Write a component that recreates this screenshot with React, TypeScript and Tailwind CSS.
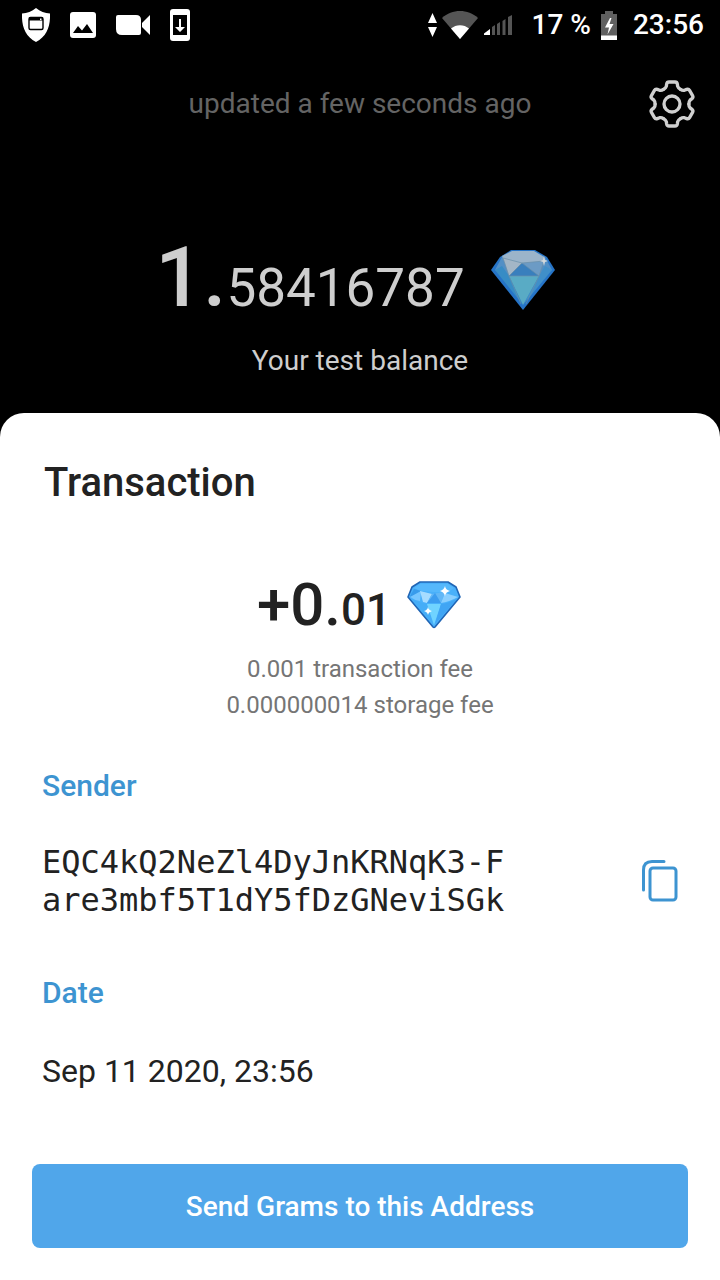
import type { ReactNode } from 'react';

interface SectionProps {
    title: string;
    children: ReactNode;
}

const transaction = {
    fees: ['0.001 transaction fee', '0.000000014 storage fee'],
    sender: ['EQC4kQ2NeZl4DyJnKRNqK3-F', 'are3mbf5T1dY5fDzGNeviSGk'],
    date: 'Sep 11 2020, 23:56',
};

const StatusBar = () => (
    <div className="flex h-[50px] items-center justify-between pl-[22px] pr-4 text-[28px] font-medium text-white">
        <div className="flex items-center gap-5">
            {/* Shield */}
            <svg className="h-[34px] w-7" viewBox="0 0 28 34" fill="none">
                <path d="M14 0C10 3.500 5 5 0 5.500C-.5 18 3 28 14 34C25 28 28.500 18 28 5.500C23 5 18 3.500 14 0Z" fill="white" />
                <rect x="7" y="9.500" width="14" height="12" rx="1.500" stroke="black" strokeWidth="1.400" />
                <path d="M7 9.500h14v3H7z" fill="black" />
                <path d="M18 10.500h1.500v1.500H18z" fill="white" />
            </svg>
            {/* Picture */}
            <svg className="h-[26px] w-[26px]" viewBox="0 0 26 26">
                <rect width="26" height="26" rx="3" fill="white" />
                <path d="M3 21L8 14L12 18.500L17 12L23 21Z" fill="black" />
            </svg>
            {/* Video camera */}
            <svg className="h-5 w-[34px]" viewBox="0 0 34 20" fill="white">
                <path d="M2 0H20Q25 0 25 5V18Q25 20 23 20H6Q0 20 0 14V2Q0 0 2 0Z" />
                <path d="M26 8L34 0V20L26 12Z" />
            </svg>
            {/* Phone download */}
            <svg className="h-8 w-5" viewBox="0 0 20 32">
                <rect width="20" height="32" rx="3" fill="white" />
                <path d="M3 6h14v20H3z" fill="black" />
                <path d="M9 10h2v8H15l-5 5-5-5h4z" fill="white" />
            </svg>
        </div>
        <div className="flex items-center">
            <svg className="mr-1 h-6 w-[11px]" viewBox="0 0 11 24" fill="white">
                <path d="M5.500 0L10 10H1zM5.500 24L10 14H1z" />
            </svg>
            <svg className="mr-1.5 h-7 w-9" viewBox="0 0 36 28">
                <path d="M0 7C10-2.300 26-2.300 36 7L18 28Z" fill="#555555" />
                <path d="M9 17.500C14 13 22 13 27 17.500L18 28Z" fill="white" />
            </svg>
            <svg className="mr-5 h-5 w-7" viewBox="0 0 28 20">
                <path d="M0 20v-1.500L6 14v6z" fill="white" />
                <path d="M8 20v-8l3-2v10zM13 20V9l3-2v13zM18.500 20V6l3-2v16zM24 20V2l4-2v20z" fill="#555555" />
            </svg>
            <span>17 %</span>
            <svg className="ml-2.5 mr-4 h-[29px] w-4" viewBox="0 0 16 29">
                <path d="M4 0h8v3h4v26H0V3h4z" fill="#606060" />
                <path d="M0 24.500h16V29H0zM9 7L4 16.500h4L6.500 23.500L12.500 13H8.500L10.500 7z" fill="white" />
            </svg>
            <span>23:56</span>
        </div>
    </div>
);

const GearIcon = () => (
    <svg className="h-12 w-12" viewBox="-72 -72 144 144" fill="none" stroke="#d0d0d0" strokeWidth="10" strokeLinecap="round">
        {[0, 60, 120, 180, 240, 300].map((angle) => (
            <path
                key={angle}
                transform={`rotate(${angle})`}
                d="M-25-44Q-19-47-17-53L-16-60Q-15-66-9-66H9Q15-66 16-60L17-53Q19-47 25-44"
            />
        ))}
        <circle r="24" />
    </svg>
);

const DimGem = () => (
    <svg className="mb-[18px] h-[61px] w-16 self-end" viewBox="0 0 64 61">
        <path d="M20 1H44L56 8L64 21L32 61L0 21L9 8Z" fill="#2674c7" />
        <path d="M20 3H44L54 8L61 21L50 27H15L4 21L11 8Z" fill="#528fc5" />
        <path d="M11 7L21 2H43L53 8L54 13L33 15L14 13Z" fill="#9bb4ca" />
        <path d="M12 9L31 14L18 27Z" fill="#a3b6c6" />
        <path d="M31 14L53 12L48 27Z" fill="#6c9bc5" />
        <path d="M31 14L48 27H18Z" fill="#397fbd" />
        <path d="M4 21L11 17L18 27L32 56Z" fill="#378cc5" />
        <path d="M61 21L54 17L48 27L32 56Z" fill="#408fc9" />
        <path d="M18 27H48L32 56Z" fill="#59abc5" />
        <path d="M12 9L31 14L53 12L48 27L35 55M12 9L18 27L30 55M31 14L18 27H48Z" fill="none" stroke="#6a8fa9" strokeWidth=".7" />
        <path d="M53 7L54 11L57 12L54 13L53 17L52 13L49 12L52 11Z" fill="#d4d9dc" />
    </svg>
);

const BrightGem = () => (
    <svg className="h-12 w-[54px]" viewBox="0 0 54 48">
        <path d="M13 1H41L49 6L53 16L28 46Q27 47 26 46L1 16L5 6Z" fill="#49b0fa" stroke="#2065b5" strokeWidth="1.600" strokeLinejoin="round" />
        <path d="M13 3H41L47 7L40 12L14 10L7 7Z" fill="#55b8fc" />
        <path d="M7 8L14 10L4 17L3 15Z" fill="#389beb" />
        <path d="M14 10L13 20Q7 19 3 16Z" fill="#77c6ff" />
        <path d="M13 10L25 13L20 22L16 21Z" fill="#a6dcff" />
        <path d="M25 13L38 11L34 22H20Z" fill="#62b7f6" />
        <path d="M28 12L34 22H20Z" fill="#3c9df0" />
        <path d="M38 12L51 16Q42 21 34 22Z" fill="#8acfff" />
        <path d="M3 17Q10 21 20 23L26 43Z" fill="#45adf7" />
        <path d="M20 23H34L27 44Z" fill="#70d3ff" />
        <path d="M51 17Q43 22 34 23L28 43Z" fill="#40a5f4" />
        <path d="M38 5Q38.500 9 43 10Q38.500 11 38 15Q37 11 33 10Q37 9 38 5ZM21 26Q21.500 29 25 30Q21.500 31 21 34Q20.500 31 17 30Q20.500 29 21 26Z" fill="white" />
    </svg>
);

const CopyIcon = () => (
    <svg className="h-[42px] w-9" viewBox="0 0 36 42" fill="none" stroke="#3d94d1" strokeWidth="3" strokeLinecap="round">
        <path d="M1.500 30V10Q1.500 1.500 10 1.500H22" />
        <rect x="8" y="8" width="26" height="32" rx="3" />
    </svg>
);

const Section = ({ title, children }: SectionProps) => (
    <section>
        <h2 className="text-[30px] leading-10 font-medium text-[#3d94d1]">{title}</h2>
        {children}
    </section>
);

const App = () => {
    return (
        <div className="flex min-h-screen flex-col bg-black font-['Roboto',sans-serif]">
            <StatusBar />

            {/* Wallet header */}
            <header className="grid h-[108px] grid-cols-[1fr_auto_1fr] items-center">
                <p className="col-start-2 text-[28px] text-[#646464]">updated a few seconds ago</p>
                <button type="button" aria-label="Settings" className="mr-6 justify-self-end">
                    <GearIcon />
                </button>
            </header>

            <div className="flex flex-col items-center pt-[70px] pb-8 text-[#cecece]">
                <div className="flex items-center gap-[26px] pr-2.5">
                    <p className="text-[84px] leading-[100px] font-medium">
                        1.<span className="text-[53px] leading-none font-normal">58416787</span>
                    </p>
                    <DimGem />
                </div>
                <p className="mt-[13px] text-[28px] leading-10">Your test balance</p>
            </div>

            {/* Transaction sheet */}
            <main className="flex flex-1 flex-col rounded-t-3xl bg-white px-8 pt-[46px] pb-8 text-[#222222]">
                <h1 className="pl-3 text-[40px] leading-12 font-medium">Transaction</h1>

                <div className="mt-[62px] flex items-center justify-center gap-4 pr-0.5">
                    <p className="text-[60px] leading-[72px] font-medium">
                        +0.<span className="text-[44px] leading-none">01</span>
                    </p>
                    <BrightGem />
                </div>

                <div className="mt-2.5 text-center text-[24px] leading-9 text-[#757575]">
                    {transaction.fees.map((fee) => (
                        <p key={fee}>{fee}</p>
                    ))}
                </div>

                <div className="mt-[43px] mb-[70px] flex flex-col gap-[54px] px-2.5">
                    <Section title="Sender">
                        <div className="mt-[37px] flex items-center justify-between">
                            <p className="font-['DejaVu_Sans_Mono',monospace] text-[32px] leading-[38px]">
                                {transaction.sender.map((line) => (
                                    <span key={line} className="block">{line}</span>
                                ))}
                            </p>
                            <button type="button" aria-label="Copy address">
                                <CopyIcon />
                            </button>
                        </div>
                    </Section>
                    <Section title="Date">
                        <p className="mt-[38px] text-[32px] leading-10">{transaction.date}</p>
                    </Section>
                </div>

                <button type="button" className="mt-auto h-[84px] rounded-lg bg-[#50a6ea] pt-0.5 text-[28px] font-medium text-white">
                    Send Grams to this Address
                </button>
            </main>
        </div>
    );
};

export default App;
